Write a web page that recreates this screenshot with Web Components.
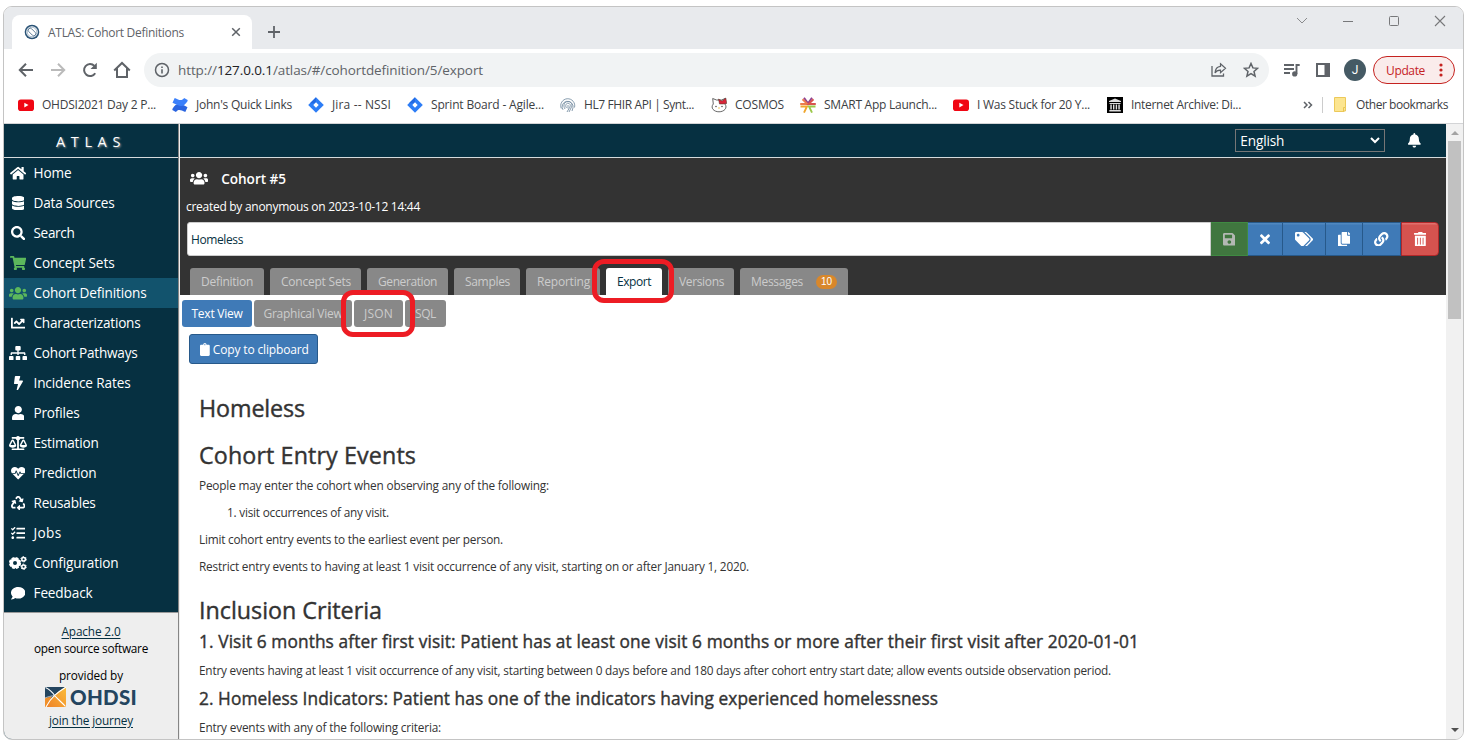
<!DOCTYPE html>
<html lang="en">
<head>
<meta charset="utf-8">
<title>ATLAS: Cohort Definitions</title>
<style>
html,body{margin:0;height:100%;background:#fff;overflow:hidden}
body{font-family:"Open Sans","Noto Sans",sans-serif;font-size:12px;color:#333}
</style>
</head>
<body>
<browser-window></browser-window>
<script>
const ICONS={
home:[576,'M280.37 148.26L96 300.11V464a16 16 0 0 0 16 16l112.06-.29a16 16 0 0 0 15.92-16V368a16 16 0 0 1 16-16h64a16 16 0 0 1 16 16v95.64a16 16 0 0 0 16 16.05L464 480a16 16 0 0 0 16-16V300L295.67 148.26a12.19 12.19 0 0 0-15.3 0zM571.6 251.47L488 182.56V44.05a12 12 0 0 0-12-12h-56a12 12 0 0 0-12 12v72.61L318.47 43a48 48 0 0 0-61 0L4.34 251.47a12 12 0 0 0-1.6 16.9l25.5 31A12 12 0 0 0 45.15 301l235.22-193.74a12.19 12.19 0 0 1 15.3 0L530.9 301a12 12 0 0 0 16.9-1.6l25.5-31a12 12 0 0 0-1.7-16.93z'],
database:[448,'M448 73.143v45.714C448 159.143 347.667 192 224 192S0 159.143 0 118.857V73.143C0 32.857 100.333 0 224 0s224 32.857 224 73.143zM448 176v102.857C448 319.143 347.667 352 224 352S0 319.143 0 278.857V176c48.125 33.143 136.208 48.572 224 48.572S399.874 209.143 448 176zm0 160v102.857C448 479.143 347.667 512 224 512S0 479.143 0 438.857V336c48.125 33.143 136.208 48.572 224 48.572S399.874 369.143 448 336z'],
search:[512,'M505 442.7L405.3 343c-4.5-4.5-10.6-7-17-7H372c27.6-35.3 44-79.7 44-128C416 93.1 322.9 0 208 0S0 93.1 0 208s93.1 208 208 208c48.3 0 92.7-16.4 128-44v16.3c0 6.4 2.5 12.5 7 17l99.7 99.7c9.4 9.4 24.6 9.4 33.9 0l28.3-28.3c9.4-9.4 9.4-24.6.1-34zM208 336c-70.7 0-128-57.2-128-128 0-70.7 57.2-128 128-128 70.7 0 128 57.2 128 128 0 70.7-57.2 128-128 128z'],
cart:[576,'M528.12 301.319l47.273-208C578.806 78.301 567.391 64 551.99 64H159.208l-9.166-44.81C147.758 8.021 137.93 0 126.529 0H24C10.745 0 0 10.745 0 24v16c0 13.255 10.745 24 24 24h69.883l70.248 343.435C147.325 417.1 136 435.222 136 456c0 30.928 25.072 56 56 56s56-25.072 56-56c0-15.674-6.447-29.835-16.824-40h209.647C430.447 426.165 424 440.326 424 456c0 30.928 25.072 56 56 56s56-25.072 56-56c0-22.172-12.888-41.332-31.579-50.405l5.517-24.276c3.413-15.018-8.002-29.319-23.403-29.319H218.117l-6.545-32h293.145c11.206 0 20.92-7.754 23.403-18.681z'],
users:[640,'M96 224c35.3 0 64-28.7 64-64s-28.7-64-64-64-64 28.7-64 64 28.7 64 64 64zm448 0c35.3 0 64-28.7 64-64s-28.7-64-64-64-64 28.7-64 64 28.7 64 64 64zm32 32h-64c-17.6 0-33.5 7.1-45.1 18.6 40.3 22.1 68.9 62 75.1 109.4h66c17.7 0 32-14.3 32-32v-32c0-35.3-28.7-64-64-64zm-256 0c61.9 0 112-50.1 112-112S381.9 32 320 32 208 82.1 208 144s50.1 112 112 112zm76.8 32h-8.3c-20.8 10-43.9 16-68.5 16s-47.6-6-68.5-16h-8.3C179.6 288 128 339.6 128 403.2V432c0 26.5 21.5 48 48 48h288c26.5 0 48-21.5 48-48v-28.8c0-63.6-51.6-115.2-115.2-115.2zm-223.7-13.4C161.5 263.1 145.6 256 128 256H64c-35.3 0-64 28.7-64 64v32c0 17.7 14.3 32 32 32h65.9c6.3-47.4 34.9-87.3 75.2-109.4z'],
chart:[512,'M496 384H64V80c0-8.84-7.16-16-16-16H16C7.16 64 0 71.16 0 80v336c0 17.67 14.33 32 32 32h464c8.84 0 16-7.16 16-16v-32c0-8.84-7.16-16-16-16zM464 96H345.94c-21.38 0-32.09 25.85-16.97 40.97l32.4 32.4L288 242.75l-73.37-73.37c-12.5-12.5-32.76-12.5-45.25 0l-68.69 68.69c-6.25 6.25-6.25 16.38 0 22.63l22.62 22.62c6.25 6.25 16.38 6.25 22.63 0L192 237.25l73.37 73.37c12.5 12.5 32.76 12.5 45.25 0l96-96 32.4 32.4c15.12 15.12 40.97 4.41 40.97-16.97V112c.01-8.84-7.15-16-15.99-16z'],
sitemap:[640,'M128 352H32c-17.67 0-32 14.33-32 32v96c0 17.67 14.33 32 32 32h96c17.67 0 32-14.33 32-32v-96c0-17.67-14.33-32-32-32zm-24-80h192v48h48v-48h192v48h48v-57.59c0-21.17-17.23-38.41-38.41-38.41H344v-64h40c17.67 0 32-14.33 32-32V32c0-17.67-14.33-32-32-32H256c-17.67 0-32 14.33-32 32v96c0 17.67 14.33 32 32 32h40v64H94.41C73.23 224 56 241.23 56 262.41V320h48v-48zm264 80h-96c-17.67 0-32 14.33-32 32v96c0 17.67 14.33 32 32 32h96c17.67 0 32-14.33 32-32v-96c0-17.67-14.33-32-32-32zm240 0h-96c-17.67 0-32 14.33-32 32v96c0 17.67 14.33 32 32 32h96c17.67 0 32-14.33 32-32v-96c0-17.67-14.33-32-32-32z'],
bolt:[320,'M296 160H180.6l42.6-129.8C227.2 15 215.7 0 200 0H56C44 0 33.8 8.9 32.2 20.8l-32 240C-1.7 275.2 9.5 288 24 288h118.7L96.6 482.5c-3.6 15.2 8 29.5 23.3 29.5 8.4 0 16.4-4.4 20.8-12l176-304c9.3-15.9-2.2-36-20.7-36z'],
user:[448,'M224 256c70.7 0 128-57.3 128-128S294.7 0 224 0 96 57.3 96 128s57.3 128 128 128zm89.6 32h-16.7c-22.2 10.2-46.9 16-72.9 16s-50.6-5.8-72.9-16h-16.7C60.2 288 0 348.2 0 422.4V464c0 26.5 21.5 48 48 48h352c26.5 0 48-21.5 48-48v-41.6c0-74.2-60.2-134.4-134.4-134.4z'],
scale:[640,'M256 336h-.02c0-16.18 1.34-8.73-85.05-181.51-17.65-35.29-68.19-35.36-85.87 0C-2.06 328.75.02 320.33.02 336H0c0 44.18 57.31 80 128 80s128-35.82 128-80zM128 176l72 144H56l72-144zm511.98 160c0-16.18 1.34-8.73-85.05-181.51-17.65-35.29-68.19-35.36-85.87 0-87.12 174.26-85.04 165.84-85.04 181.51H384c0 44.18 57.31 80 128 80s128-35.82 128-80h-.02zM440 320l72-144 72 144H440zm88 128H352V153.25c23.51-10.29 41.16-31.48 46.39-57.25H528c8.84 0 16-7.16 16-16V48c0-8.84-7.16-16-16-16H383.64C369.04 12.68 346.09 0 320 0s-49.04 12.68-63.64 32H112c-8.84 0-16 7.16-16 16v32c0 8.84 7.16 16 16 16h129.61c5.23 25.76 22.87 46.96 46.39 57.25V448H112c-8.84 0-16 7.16-16 16v32c0 8.84 7.16 16 16 16h416c8.84 0 16-7.16 16-16v-32c0-8.84-7.16-16-16-16z'],
heart:[512,'M320.2 243.8l-49.7 99.4c-6 12.1-23.4 11.7-28.9-.6l-56.9-126.3-30 71.7H60.6l182.5 186.5c7.1 7.3 18.6 7.3 25.7 0L451.4 288H342.3l-22.1-44.2zM473.7 73.9l-2.4-2.5c-51.5-52.6-135.8-52.6-187.4 0L256 100l-27.9-28.5c-51.5-52.7-135.9-52.7-187.4 0l-2.4 2.4C-10.4 123.7-12.5 203 31 256h102.4l35.9-86.2c5.4-12.9 23.6-13.2 29.4-.4l58.2 129.3 49-97.9c5.9-11.8 22.7-11.8 28.6 0l27.6 55.2H481c43.5-53 41.4-132.3-7.3-182.1z'],
recycle:[512,'M184.561 261.903c3.232 13.997-12.123 24.635-24.068 17.168l-40.736-25.455-50.867 81.402C55.606 356.273 70.96 384 96.012 384H148c6.627 0 12 5.373 12 12v40c0 6.627-5.373 12-12 12H96.115c-75.334 0-121.302-83.048-81.408-146.88l50.822-81.388-40.725-25.448c-12.081-7.547-8.966-25.961 4.879-29.158l110.237-25.45c8.611-1.988 17.201 3.381 19.189 11.99l25.452 110.237zm98.561-182.915l41.289 66.076-40.74 25.457c-12.051 7.528-9 25.953 4.879 29.158l110.237 25.45c8.672 1.999 17.215-3.438 19.189-11.99l25.45-110.237c3.197-13.844-11.99-24.719-24.068-17.168l-40.687 25.424-41.263-66.082c-37.521-60.033-125.209-60.171-162.816 0l-17.963 28.766c-3.51 5.62-1.8 13.021 3.82 16.533l33.919 21.195c5.62 3.512 13.024 1.803 16.536-3.817l17.961-28.743c12.712-20.341 41.973-19.676 54.257-.022zM497.288 301.12l-27.515-44.065c-3.511-5.623-10.916-7.334-16.538-3.821l-33.861 21.159c-5.62 3.512-7.33 10.915-3.818 16.536l27.564 44.112c13.257 21.211-2.057 48.96-27.136 48.96H320V336.02c0-14.213-17.242-21.383-27.313-11.313l-80 79.981c-6.249 6.248-6.249 16.379 0 22.627l80 79.989C302.689 517.308 320 510.3 320 495.989V448h95.88c75.274 0 121.335-82.997 81.408-146.88z'],
tasks:[512,'M139.61 35.5a12 12 0 0 0-17 0L58.93 98.81l-22.7-22.12a12 12 0 0 0-17 0L3.53 92.41a12 12 0 0 0 0 17l47.59 47.4a12.78 12.78 0 0 0 17.61 0l15.59-15.62L156.52 69a12.09 12.09 0 0 0 .09-17zm0 159.19a12 12 0 0 0-17 0l-63.68 63.72-22.7-22.1a12 12 0 0 0-17 0L3.53 252a12 12 0 0 0 0 17L51 316.5a12.77 12.77 0 0 0 17.6 0l15.7-15.69 72.2-72.22a12 12 0 0 0 .09-16.9zM64 368c-26.49 0-48.59 21.5-48.59 48S37.53 464 64 464a48 48 0 0 0 0-96zm432 16H208a16 16 0 0 0-16 16v32a16 16 0 0 0 16 16h288a16 16 0 0 0 16-16v-32a16 16 0 0 0-16-16zm0-320H208a16 16 0 0 0-16 16v32a16 16 0 0 0 16 16h288a16 16 0 0 0 16-16V80a16 16 0 0 0-16-16zm0 160H208a16 16 0 0 0-16 16v32a16 16 0 0 0 16 16h288a16 16 0 0 0 16-16v-32a16 16 0 0 0-16-16z'],
comment:[512,'M256 32C114.6 32 0 125.1 0 240c0 49.6 21.4 95 57 130.7C44.5 421.1 2.7 466 2.2 466.5c-2.2 2.3-2.8 5.7-1.5 8.7S4.8 480 8 480c66.3 0 116-31.8 140.6-51.4 32.7 12.3 69 19.4 107.4 19.4 141.4 0 256-93.1 256-208S397.4 32 256 32z'],
save:[448,'M433.941 129.941l-83.882-83.882A48 48 0 0 0 316.118 32H48C21.49 32 0 53.49 0 80v352c0 26.51 21.49 48 48 48h352c26.51 0 48-21.49 48-48V163.882a48 48 0 0 0-14.059-33.941zM224 416c-35.346 0-64-28.654-64-64 0-35.346 28.654-64 64-64s64 28.654 64 64c0 35.346-28.654 64-64 64zm96-304.52V212c0 6.627-5.373 12-12 12H76c-6.627 0-12-5.373-12-12V108c0-6.627 5.373-12 12-12h228.52c3.183 0 6.235 1.264 8.485 3.515l3.48 3.48A11.996 11.996 0 0 1 320 111.48z'],
times:[352,'M242.72 256l100.07-100.07c12.28-12.28 12.28-32.19 0-44.48l-22.24-22.24c-12.28-12.28-32.19-12.28-44.48 0L176 189.28 75.93 89.21c-12.28-12.28-32.19-12.28-44.48 0L9.21 111.45c-12.28 12.28-12.28 32.19 0 44.48L109.28 256 9.21 356.07c-12.28 12.28-12.28 32.19 0 44.48l22.24 22.24c12.28 12.28 32.2 12.28 44.48 0L176 322.72l100.07 100.07c12.28 12.28 32.2 12.28 44.48 0l22.24-22.24c12.28-12.28 12.28-32.19 0-44.48L242.72 256z'],
tags:[640,'M497.941 225.941L286.059 14.059A48 48 0 0 0 252.118 0H48C21.49 0 0 21.49 0 48v204.118a48 48 0 0 0 14.059 33.941l211.882 211.882c18.744 18.745 49.136 18.746 67.882 0l204.118-204.118c18.745-18.745 18.745-49.137 0-67.882zM112 160c-26.51 0-48-21.49-48-48s21.49-48 48-48 48 21.49 48 48-21.49 48-48 48zm513.941 133.823L421.823 497.941c-18.745 18.745-49.137 18.745-67.882 0l-.36-.36L527.64 323.522c16.999-16.999 26.36-39.6 26.36-63.64s-9.362-46.641-26.36-63.64L331.397 0h48.721a48 48 0 0 1 33.941 14.059l211.882 211.882c18.745 18.745 18.745 49.137 0 67.882z'],
copy:[448,'M320 448v40c0 13.255-10.745 24-24 24H24c-13.255 0-24-10.745-24-24V120c0-13.255 10.745-24 24-24h72v296c0 30.879 25.121 56 56 56h168zm0-344V0H152c-13.255 0-24 10.745-24 24v368c0 13.255 10.745 24 24 24h272c13.255 0 24-10.745 24-24V128H344c-13.2 0-24-10.8-24-24zm120.971-31.029L375.029 7.029A24 24 0 0 0 358.059 0H352v96h96v-6.059a24 24 0 0 0-7.029-16.97z'],
link:[512,'M326.612 185.391c59.747 59.809 58.927 155.698.36 214.59-.11.12-.24.25-.36.37l-67.2 67.2c-59.27 59.27-155.699 59.262-214.96 0-59.27-59.26-59.27-155.7 0-214.96l37.106-37.106c9.84-9.84 26.786-3.3 27.294 10.606.648 17.722 3.826 35.527 9.69 52.721 1.986 5.822.567 12.262-3.783 16.612l-13.087 13.087c-28.026 28.026-28.905 73.66-1.155 101.96 28.024 28.579 74.086 28.749 102.325.51l67.2-67.19c28.191-28.191 28.073-73.757 0-101.83-3.701-3.694-7.429-6.564-10.341-8.569a16.037 16.037 0 0 1-6.947-12.606c-.396-10.567 3.348-21.456 11.698-29.806l21.054-21.055c5.521-5.521 14.182-6.199 20.584-1.731a152.482 152.482 0 0 1 20.522 17.197zM467.547 44.449c-59.261-59.262-155.69-59.27-214.96 0l-67.2 67.2c-.12.12-.25.25-.36.37-58.566 58.892-59.387 154.781.36 214.59a152.454 152.454 0 0 0 20.521 17.196c6.402 4.468 15.064 3.789 20.584-1.731l21.054-21.055c8.35-8.35 12.094-19.239 11.698-29.806a16.037 16.037 0 0 0-6.947-12.606c-2.912-2.005-6.64-4.875-10.341-8.569-28.073-28.073-28.191-73.639 0-101.83l67.2-67.19c28.239-28.239 74.3-28.069 102.325.51 27.75 28.3 26.872 73.934-1.155 101.96l-13.087 13.087c-4.35 4.35-5.769 10.79-3.783 16.612 5.864 17.194 9.042 34.999 9.69 52.721.509 13.906 17.454 20.446 27.294 10.606l37.106-37.106c59.271-59.259 59.271-155.699.001-214.959z'],
trash:[448,'M32 464a48 48 0 0 0 48 48h288a48 48 0 0 0 48-48V128H32zm272-256a16 16 0 0 1 32 0v224a16 16 0 0 1-32 0zm-96 0a16 16 0 0 1 32 0v224a16 16 0 0 1-32 0zm-96 0a16 16 0 0 1 32 0v224a16 16 0 0 1-32 0zM432 32H312l-9.4-18.7A24 24 0 0 0 281.1 0H166.8a23.72 23.72 0 0 0-21.4 13.3L136 32H16A16 16 0 0 0 0 48v32a16 16 0 0 0 16 16h416a16 16 0 0 0 16-16V48a16 16 0 0 0-16-16z'],
clipboard:[384,'M384 112v352c0 26.51-21.49 48-48 48H48c-26.51 0-48-21.49-48-48V112c0-26.51 21.49-48 48-48h80c0-35.29 28.71-64 64-64s64 28.71 64 64h80c26.51 0 48 21.49 48 48zM192 40c-13.255 0-24 10.745-24 24s10.745 24 24 24 24-10.745 24-24-10.745-24-24-24'],
bell:[448,'M224 512c35.32 0 63.97-28.65 63.97-64H160.03c0 35.35 28.65 64 63.97 64zm215.39-149.71c-19.32-20.76-55.47-51.99-55.47-154.29 0-77.7-54.48-139.9-127.94-155.16V32c0-17.67-14.32-32-31.98-32s-31.98 14.33-31.98 32v20.84C118.56 68.1 64.08 130.3 64.08 208c0 102.3-36.15 133.53-55.47 154.29-6 6.45-8.66 14.16-8.61 21.71.11 16.4 12.98 32 32.1 32h383.8c19.12 0 32-15.6 32.1-32 .05-7.55-2.61-15.27-8.61-21.71z']
};
/* Pictures with their own viewBox: [width, height, markup]; one unit is one pixel. */
const ART={
cogs:[18,14,'<g fill="none" stroke="currentColor"><circle cx="6" cy="7" r="3.6" stroke-width="3.2"/><circle cx="6" cy="7" r="5.2" stroke-width="1.8" stroke-dasharray="2.9 1.184"/><circle cx="14.6" cy="3.2" r="1.8" stroke-width="1.5"/><circle cx="14.6" cy="3.2" r="2.7" stroke-width="1" stroke-dasharray="1.5 1.327"/><circle cx="14.6" cy="10.8" r="1.8" stroke-width="1.5"/><circle cx="14.6" cy="10.8" r="2.7" stroke-width="1" stroke-dasharray="1.5 1.327"/></g>'],
favicon:[16,16,'<circle cx="8" cy="8" r="7.3" fill="#2a5376"/><circle cx="8" cy="8" r="5.800" fill="#fff"/><circle cx="8" cy="8" r="4.8" fill="none" stroke="#9fb3c5" stroke-width=".9"/><rect x="3.5" y="6" width="9" height="4" rx="2" transform="rotate(45 8 8)" fill="#fff" stroke="#5b7a95" stroke-width=".9"/>'],
close:[10,10,'<path d="M1.2 1.2l7.6 7.6M8.8 1.2L1.2 8.8" stroke="#5f6368" stroke-width="1.5"/>'],
plus:[14,14,'<path d="M7 1v12M1 7h12" stroke="#5f6368" stroke-width="1.8"/>'],
back:[16,16,'<path d="M15 8H2M8 1.8L1.8 8 8 14.2" fill="none" stroke="#5f6368" stroke-width="2"/>'],
fwd:[16,16,'<path d="M1 8h13M8 1.8L14.2 8 8 14.2" fill="none" stroke="#bababa" stroke-width="2"/>'],
reload:[16,16,'<path d="M13.2 11.2A6 6 0 1 1 12.4 3.9" fill="none" stroke="#5f6368" stroke-width="2"/><path d="M14.8.8v6.3H8.5z" fill="#5f6368"/>'],
house:[18,18,'<path d="M1.2 9.4L9 2l7.8 7.4M4 7.5V16h10V7.5" fill="none" stroke="#5f6368" stroke-width="2"/>'],
info:[16,16,'<circle cx="8" cy="8" r="6.5" fill="none" stroke="#5f6368" stroke-width="1.5"/><path d="M8 7.2v4.2M8 4.5v1.6" stroke="#5f6368" stroke-width="1.6"/>'],
share:[16,16,'<path d="M1 4v10h11.5v-2.5" fill="none" stroke="#5f6368" stroke-width="1.3"/><path d="M9.5 1.8l5 4.4-5 4.4V8.1C6.5 8 5 9.2 4 11c.2-3.5 1.7-6.3 5.5-6.7z" fill="none" stroke="#5f6368" stroke-width="1.2"/>'],
star:[16,16,'<path d="M8 1.5l1.9 4.400 4.700.4-3.600 3.100 1.100 4.700L8 11.600l-4.100 2.500L5 9.400 1.400 6.300l4.700-.4z" fill="none" stroke="#5f6368" stroke-width="1.5"/>'],
media:[17,14,'<path d="M1 2h10M1 6h10M1 10h6M13.5 11V2h3.2" stroke="#5f6368" stroke-width="1.9" fill="none"/><circle cx="11.7" cy="10.9" r="2.6" fill="#5f6368"/>'],
panel:[14,14,'<path d="M1 1h12v12H1z" fill="none" stroke="#5f6368" stroke-width="2"/><path d="M8.500 1H13v12H8.500z" fill="#5f6368"/>'],
dots:[4,14,'<g fill="#c5221f"><circle cx="2" cy="2" r="1.6"/><circle cx="2" cy="7" r="1.6"/><circle cx="2" cy="12" r="1.6"/></g>'],
chev:[12,8,'<path d="M1 1l5 5 5-5" fill="none" stroke="#8a8b8d" stroke-width="1"/>'],
min:[12,12,'<path d="M1 6.500h10" stroke="#77787a"/>'],
max:[12,12,'<rect x="1.500" y="1.500" width="9" height="9" rx="1" fill="none" stroke="#77787a"/>'],
wclose:[12,12,'<path d="M1 1l10 10M11 1L1 11" stroke="#77787a" stroke-width="1.1"/>'],
youtube:[16,16,'<rect y="2.500" width="16" height="11.500" rx="2.800" fill="#f00613"/><path d="M6.300 5.700v4.800L10.500 8.100z" fill="#fff"/>'],
confluence:[16,16,'<path d="M.5 11.700C4.500 5.500 7.500 6 15.500 10.200L13.300 15C8.500 12.500 6 12 3.900 15L.3 13z" fill="#2b65e0"/><path d="M15.500 4.300C11.500 10.500 8.500 10 .5 5.800L2.700 1C7.500 3.500 10 4 12.100 1l3.600 2z" fill="#3b80fb"/>'],
jira:[16,16,'<path d="M8 .2L15.800 8 8 15.800.2 8z" fill="#2d7df6"/><path d="M8 .2L2 6.200h6L8 .2z" fill="#2269e2"/><path d="M8 5.300L10.700 8 8 10.700 5.300 8z" fill="#fff"/>'],
finger:[16,16,'<g fill="none" stroke="#7890a4" stroke-width=".9"><path d="M1.300 11.500A7 7 0 1 1 14.500 10.500M3 12.800A5.500 5.500 0 1 1 13 10.800L12 14M5 12C2.500 8 4.800 4.500 8 4.500s5 3 3 6.500l-2 4M6.500 11C4.800 8.500 6.200 6.200 8 6.200s3 1.800 1.800 4L7 15M8 8v3.500"/></g>'],
kitty:[16,16,'<path d="M2.300 7L1.700 1.500 5.500 3h5L14.200 1.500 13.900 7C17 11 13 14.800 8 14.800S-1 11 2.300 7z" fill="#fff" stroke="#555" stroke-width=".9"/><path d="M7.500 2l3.500 2 3.800-3 1 5.400-3.600.6L8.500 7z" fill="#d9263a" stroke="#432" stroke-width=".5"/><circle cx="5" cy="9.500" r=".7" fill="#333"/><circle cx="11" cy="9.500" r=".7" fill="#333"/><circle cx="8" cy="11" r=".7" fill="#e3b222"/>'],
smart:[16,16,'<g fill="none" stroke-width="1.900"><path d="M4 .7l4 5.500L12 .7" stroke="#8e3f8f"/><path d="M2.500 2.200L7.500 7H.2" stroke="#ec7b4d"/><path d="M13.500 2.200L8.500 7h7.300" stroke="#d9534f"/><path d="M.5 9.500H7L4 15.600" stroke="#f0a62e"/><path d="M15.500 9.500H9l3 6.100" stroke="#9cc84b"/></g>'],
archive:[16,16,'<path d="M0 0h16v16H0z" fill="#000"/><path d="M8 1.500L2 4v1h12V4zM2.500 6h11v1h-11zM3.300 7.500h1.500v5H3.300zM6 7.500h1.400v5H6zM8.700 7.500h1.400v5H8.700zM11.300 7.500h1.500v5h-1.500zM2.300 13h11.500v1.400H2.300z" fill="#ddd"/>'],
folder:[12,15,'<path d="M.5.500h11v9.500L10 11.500v3H.500z" fill="#fce590" stroke="#ecc95a"/><path d="M9.500 10.500h2v3.500h-2z" fill="#fce590" stroke="#e6bf45" stroke-width=".8"/>'],
more:[10,8,'<path d="M1 1l3 3-3 3M5.500 1l3 3-3 3" fill="none" stroke="#5f6368" stroke-width="1.500"/>'],
seldown:[10,7,'<path d="M1 1l4 4 4-4" fill="none" stroke="#fff" stroke-width="2"/>'],
up:[8,4,'<path d="M0 4l4-4 4 4z" fill="#a3a3a3"/>'],
down:[8,4,'<path d="M0 0l4 4 4-4z" fill="#505050"/>'],
ohdsi:[21,20,'<defs><linearGradient id="g" x1="0" y1="1" x2="1" y2="0"><stop offset="0" stop-color="#ee8128"/><stop offset="1" stop-color="#fbbd3a"/></linearGradient></defs><path d="M0 0h21v20H0z" fill="url(#g)"/><path d="M0 0h20.500C16 2.500 12 5 9.500 8.500 6 11 3 14.500 0 20z" fill="#24455f"/><path d="M0 11l7-1.500L1 20H0z" fill="#f0902b"/><path d="M.500.500c4 2 7 4.500 9 8 3 3.500 7.500 7 11 11M21 0C13 5 6 10 1 20" fill="none" stroke="#fff" stroke-width="1.100"/><path d="M0 11c3-1.500 6.500-2 9.500-2.500" fill="none" stroke="#dfe4e8" stroke-width=".7"/>']
};
const make=(name,html)=>customElements.define(name,class extends HTMLElement{
 constructor(){super();this.attachShadow({mode:'open'}).innerHTML=typeof html==='function'?html(this):html}
});
customElements.define('ui-icon',class extends HTMLElement{
 constructor(){super();this.attachShadow({mode:'open'})}
 connectedCallback(){
  const n=this.getAttribute('name'),s=+this.getAttribute('size')||14;
  const css='<style>:host{display:inline-flex;flex:none}svg{display:block}</style>';
  if(ICONS[n]){const [w,d]=ICONS[n];this.shadowRoot.innerHTML=css+`<svg width="${w/512*s}" height="${s}" viewBox="0 0 ${w} 512"><path fill="currentColor" d="${d}"/></svg>`}
  else{const [w,h,m]=ART[n];this.shadowRoot.innerHTML=css+`<svg width="${w}" height="${h}" viewBox="0 0 ${w} ${h}">${m}</svg>`}
 }
});
/* A single line of text whose tracking is tuned so that it fills the width in "w". */
customElements.define('fit-text',class extends HTMLElement{
 constructor(){super();this.attachShadow({mode:'open'}).innerHTML='<style>:host{display:inline-block;flex:none;white-space:pre}</style><slot></slot>'}
 connectedCallback(){
  const w=+this.getAttribute('w');if(!w)return;
  this.style.letterSpacing='0px';
  const nat=this.getBoundingClientRect().width;
  this.style.letterSpacing=((w-nat)/this.textContent.length)+'px';
 }
});
make('tab-strip',`<style>
:host{display:flex;height:42px;background:#e8eaed;padding-left:8px;box-sizing:border-box}
.tab{width:240px;height:34px;margin-top:8px;background:#fff;border-radius:8px 8px 0 0;display:flex;align-items:center;padding:0 11px 0 12px;box-sizing:border-box;color:#5f6368}
.tab fit-text{margin:0 auto 0 8px}
.plus{margin:18px 0 0 15px}
.win{margin-left:auto;display:flex;gap:34px;padding:8px 17px 0 0;height:12px;align-items:center}
</style><div class="tab"><ui-icon name="favicon"></ui-icon><fit-text w="136">ATLAS: Cohort Definitions</fit-text><ui-icon name="close"></ui-icon></div>
<ui-icon class="plus" name="plus"></ui-icon>
<div class="win"><ui-icon name="chev"></ui-icon><ui-icon name="min"></ui-icon><ui-icon name="max"></ui-icon><ui-icon name="wclose"></ui-icon></div>`);
make('tool-bar',`<style>
:host{display:flex;height:42px;align-items:center;padding:0 8px 0 14px;box-sizing:border-box}
.nav{display:flex;gap:16px;align-items:center;width:126px}
.omni{width:1125px;height:34px;border-radius:17px;background:#f1f3f4;display:flex;align-items:center;padding:0 10px 0 10px;box-sizing:border-box;font-size:13.500px;color:#5f6368}
.omni fit-text{margin:0 auto 0 8px}b{font-weight:400;color:#202124}.omni ui-icon+ui-icon{margin-left:16px}
.r{display:flex;align-items:center;margin-left:14px}
.av{width:22px;height:22px;border-radius:50%;background:#455a64;color:#fff;font:12px/22px Roboto,sans-serif;text-align:center;margin:0 7px 0 14px}
.up{box-sizing:border-box;width:82px;height:28px;border:1px solid #c5221f;border-radius:14px;background:#faeceb;color:#c5221f;display:flex;align-items:center;justify-content:space-between;padding:0 11px 0 12px}
.r ui-icon+ui-icon{margin-left:16px}
</style><div class="nav"><ui-icon name="back"></ui-icon><ui-icon name="fwd"></ui-icon><ui-icon name="reload"></ui-icon><ui-icon name="house" style="margin-left:-1px"></ui-icon></div>
<div class="omni"><ui-icon name="info"></ui-icon><fit-text w="305">http://<b>127.0.0.1</b>/atlas/#/cohortdefinition/5/export</fit-text><ui-icon name="share"></ui-icon><ui-icon name="star"></ui-icon></div>
<div class="r"><ui-icon name="media"></ui-icon><ui-icon name="panel"></ui-icon><div class="av">J</div><div class="up"><fit-text w="39">Update</fit-text><ui-icon name="dots"></ui-icon></div></div>`);
make('book-mark',e=>`<style>:host{display:flex;gap:8px;align-items:center}</style><ui-icon name="${e.getAttribute('icon')}"></ui-icon><fit-text w="${e.getAttribute('w')}">${e.getAttribute('label')}</fit-text>`);
const bm=(i,w,l)=>`<book-mark icon="${i}" w="${w}" label="${l}"></book-mark>`;
make('bookmarks-bar',`<style>
:host{display:grid;grid-template-columns:154px 136px 99px 153px 151px 89px 153px 154px 196px 22px 1fr;height:33px;align-items:center;padding:0 0 5px 14px;box-sizing:border-box;border-bottom:1px solid #d3d4d6;color:#3c4043}
.o{border-left:1px solid #ccc;height:16px;display:flex;align-items:center;gap:10px;padding-left:11px;margin-left:-3px}
</style>${bm('youtube',114,'OHDSI2021 Day 2 P...')}${bm('confluence',96,"John's Quick Links")}${bm('jira',59,'Jira -- NSSI')}${bm('jira',113,'Sprint Board - Agile...')}${bm('finger',110,'HL7 FHIR API | Synt...')}${bm('kitty',49,'COSMOS')}${bm('smart',113,'SMART App Launch...')}${bm('youtube',113,'I Was Stuck for 20 Y...')}${bm('archive',110,'Internet Archive: Di...')}<ui-icon name="more"></ui-icon><div class="o"><ui-icon name="folder"></ui-icon><fit-text w="92">Other bookmarks</fit-text></div>`);
make('nav-item',e=>`<style>:host{display:grid;grid-template-columns:18px auto;justify-content:start;gap:6.500px;height:30px;align-items:center;padding-left:5px;font-size:13.600px;color:#fff}:host([active]){background:#12536d}ui-icon{justify-self:center}:host([green]) ui-icon{color:#5cb85c}fit-text{padding-bottom:1px}</style><ui-icon name="${e.getAttribute('icon')}" size="14.400"></ui-icon><fit-text w="${e.getAttribute('w')}">${e.getAttribute('label')}</fit-text>`);
const items=[['home',38,'Home'],['database',81,'Data Sources'],['search',41,'Search'],['cart',81,'Concept Sets','green'],['users',113,'Cohort Definitions','green active'],['chart',107,'Characterizations'],['sitemap',104,'Cohort Pathways'],['bolt',97,'Incidence Rates'],['user',46,'Profiles'],['scale',65,'Estimation'],['heart',63,'Prediction'],['recycle',62,'Reusables'],['tasks',28,'Jobs'],['cogs',85,'Configuration'],['comment',59,'Feedback']];
make('side-bar',`<style>
:host{display:flex;flex-direction:column;width:174px;background:#063041;border-right:1px solid #858585}
.brand{height:33px;border-bottom:1px solid #d5dadc;color:#fff;font-size:14.500px;line-height:36px;text-shadow:1px 1px 2px #999;padding-left:52px}
.nav{height:454px}
.foot{flex:1;background:#eee;border-top:1px solid #999;color:#000;display:flex;flex-direction:column;align-items:center;padding-top:10px;font-size:11.800px;line-height:17px}
.u{color:#063041;text-decoration:underline;text-underline-offset:2px}.gap{margin-top:10px}
.logo{display:flex;align-items:center;gap:4px;height:20px;margin:3px 0 5px;font:900 20.500px/20px Lato,"Noto Sans",sans-serif;color:#24455f}
</style><div class="brand"><fit-text w="70">ATLAS</fit-text></div><div class="nav">${items.map(([i,w,l,a=''])=>`<nav-item icon="${i}" w="${w}" label="${l}" ${a}></nav-item>`).join('')}</div>
<div class="foot"><fit-text class="u" w="59">Apache 2.0</fit-text><fit-text w="114">open source software</fit-text><fit-text class="gap" w="64">provided by</fit-text><div class="logo"><ui-icon name="ohdsi"></ui-icon><fit-text w="67">OHDSI</fit-text></div><fit-text class="u" w="84">join the journey</fit-text></div>`);
make('top-bar',`<style>:host{display:flex;justify-content:flex-end;align-items:center;height:33px;background:#063041;border-bottom:1px solid #d5dadc;color:#fff;padding-right:25px}
.sel{box-sizing:border-box;width:150px;height:23px;border:1px solid #767676;display:flex;align-items:center;justify-content:space-between;padding:0 4px;font-size:13.600px;margin-right:23px}</style><div class="sel"><fit-text w="44">English</fit-text><ui-icon name="seldown"></ui-icon></div><ui-icon name="bell" size="14.500"></ui-icon>`);
make('cohort-tab',`<style>:host{display:flex;box-sizing:border-box;height:27px;background:#888;color:#ccc;border-radius:3px 3px 0 0;align-items:center;padding-left:11px}:host([active]){background:#fff;color:#063041}</style><slot></slot>`);
make('tool-button',e=>`<style>:host{box-sizing:border-box;display:flex;height:34px;align-items:center;justify-content:center;background:linear-gradient(#5088c0 0,#5088c0 1px,#3f7ab7 2px);border:1px solid #27598a;border-left-width:0;color:#fff}
:host([kind=save]){background:#40763f;border-color:#3f8a42;color:#b3b8b3}:host([kind=del]){background:linear-gradient(#e0706d 0,#e0706d 1px,#d5534f 2px);border-color:#b3282a;border-radius:0 4px 4px 0;border-left-width:1px}</style><ui-icon name="${e.getAttribute('icon')}" size="14.500"></ui-icon>`);
make('cohort-header',`<style>
:host{display:block;background:#333;height:137px;color:#fff}
.t{display:flex;align-items:center;gap:13px;padding:0 0 0 10px;height:40px;font-size:13.600px;font-weight:600}
.c{height:24px;line-height:18px;padding-left:6px;font-size:12px}
.row{display:flex;padding-left:7px}
.in{box-sizing:border-box;width:1024px;height:34px;background:#fff;border:1px solid #ccc;color:#063041;line-height:33px;padding-left:3px;font-size:12px;border-radius:3px 0 0 3px}
.tabs{display:flex;gap:6px;margin:12px 0 0 10px}
.badge{width:21px;height:14px;border-radius:7px;background:#d8872b;color:#fff;font:10px/14px "Liberation Sans",sans-serif;text-align:center;margin-left:13px}
</style><div class="t"><ui-icon name="users" size="14.500"></ui-icon><fit-text w="65">Cohort #5</fit-text></div>
<div class="c"><fit-text w="234">created by anonymous on 2023-10-12 14:44</fit-text></div>
<div class="row"><div class="in"><fit-text w="52">Homeless</fit-text></div>
<tool-button kind="save" icon="save" style="width:37px"></tool-button><tool-button icon="times" style="width:35px"></tool-button><tool-button icon="tags" style="width:43px"></tool-button><tool-button icon="copy" style="width:37px"></tool-button><tool-button icon="link" style="width:38px"></tool-button><tool-button kind="del" icon="trash" style="width:38px"></tool-button></div>
<div class="tabs"><cohort-tab style="width:74px"><fit-text w="52">Definition</fit-text></cohort-tab><cohort-tab style="width:91px"><fit-text w="70">Concept Sets</fit-text></cohort-tab><cohort-tab style="width:81px"><fit-text w="59">Generation</fit-text></cohort-tab><cohort-tab style="width:66px"><fit-text w="45">Samples</fit-text></cohort-tab><cohort-tab style="width:74px"><fit-text w="53">Reporting</fit-text></cohort-tab><cohort-tab active style="width:56px"><fit-text w="34">Export</fit-text></cohort-tab><cohort-tab style="width:66px"><fit-text w="45">Versions</fit-text></cohort-tab><cohort-tab style="width:108px"><fit-text w="52">Messages</fit-text><div class="badge">10</div></cohort-tab></div>`);
make('export-view',`<style>
:host{display:block;background:#fff;color:#333}
.pills{display:flex;gap:2px;padding:5px 0 0 2px}
.pill{height:27px;border-radius:3px;background:#888;color:#ccc;display:flex;align-items:center;justify-content:center}.pill.on{background:#3f7ab7;color:#fff}
.copy{box-sizing:border-box;width:129px;height:30px;margin:7px 0 0 9px;border:1px solid #27598a;border-radius:3px;background:#3f7ab7;color:#fff;display:flex;align-items:center;gap:3px;padding-left:10px}
.doc{padding:0 0 0 19px}.doc>*{margin:0;display:flex;align-items:center}
h2,h4{font-weight:400;-webkit-text-stroke:.4px #333}h2{font-size:23.300px;height:30px}h4{font-size:17.300px;height:24px}p{font-size:11.800px;height:18px}
</style><div class="pills"><div class="pill on" style="width:70px"><fit-text w="51">Text View</fit-text></div><div class="pill" style="width:98px"><fit-text w="79">Graphical View</fit-text></div><div class="pill" style="width:49px"><fit-text w="29">JSON</fit-text></div><div class="pill" style="width:41px"><fit-text w="21">SQL</fit-text></div></div>
<div class="copy"><ui-icon name="clipboard" size="13"></ui-icon><fit-text w="96">Copy to clipboard</fit-text></div>
<div class="doc"><h2 style="margin-top:29px"><fit-text w="106">Homeless</fit-text></h2><h2 style="margin-top:17px"><fit-text w="217">Cohort Entry Events</fit-text></h2>
<p style="margin-top:6px"><fit-text w="350">People may enter the cohort when observing any of the following:</fit-text></p>
<p style="margin-top:9px;padding-left:28px"><fit-text w="162">1. visit occurrences of any visit.</fit-text></p>
<p style="margin-top:9px"><fit-text w="304">Limit cohort entry events to the earliest event per person.</fit-text></p>
<p style="margin-top:9px"><fit-text w="550">Restrict entry events to having at least 1 visit occurrence of any visit, starting on or after January 1, 2020.</fit-text></p>
<h2 style="margin-top:20px"><fit-text w="183">Inclusion Criteria</fit-text></h2>
<h4 style="margin-top:4px"><fit-text w="940">1. Visit 6 months after first visit: Patient has at least one visit 6 months or more after their first visit after 2020-01-01</fit-text></h4>
<p style="margin-top:8px"><fit-text w="912">Entry events having at least 1 visit occurrence of any visit, starting between 0 days before and 180 days after cohort entry start date; allow events outside observation period.</fit-text></p>
<h4 style="margin-top:7px"><fit-text w="739">2. Homeless Indicators: Patient has one of the indicators having experienced homelessness</fit-text></h4>
<p style="margin-top:8px"><fit-text w="242">Entry events with any of the following criteria:</fit-text></p></div>`);
make('scroll-bar',`<style>:host{display:flex;flex-direction:column;align-items:center;width:17px;background:#f1f1f1;justify-content:space-between;padding:7px 0 7px;box-sizing:border-box}.th{width:13px;height:178px;background:#c1c1c1;margin:6px 0 auto}</style><ui-icon name="up"></ui-icon><div class="th"></div><ui-icon name="down"></ui-icon>`);
make('red-mark',`<style>:host{position:absolute;box-sizing:border-box;border:5px solid #ed1c24;border-radius:12px}</style>`);
make('browser-window',`<style>
:host{display:block;box-sizing:border-box;width:1466px;height:746px;padding:6px 0 0 3px;position:relative}
.frame{box-sizing:border-box;width:1461px;height:734px;border:1px solid #c4c4c4;border-radius:9px;overflow:hidden;background:#fff}
.app{display:grid;grid-template-columns:175px 1fr 17px;height:615px}
.main{border-left:1px solid #eee;overflow:hidden}
</style><div class="frame"><tab-strip></tab-strip><tool-bar></tool-bar><bookmarks-bar></bookmarks-bar>
<div class="app"><side-bar></side-bar><div class="main"><top-bar></top-bar><cohort-header></cohort-header><export-view></export-view></div><scroll-bar></scroll-bar></div></div>
<red-mark style="left:592px;top:259px;width:82px;height:44px"></red-mark><red-mark style="left:341px;top:290px;width:74px;height:47px"></red-mark>`);
</script>
</body>
</html>
